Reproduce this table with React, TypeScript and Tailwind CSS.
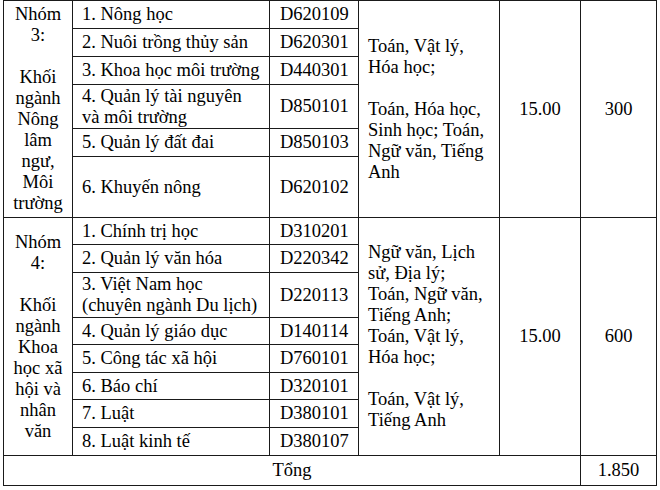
interface Row {
  name: React.ReactNode
  code: string
  h: string
}

const group3: Row[] = [
  { name: '1. Nông học', code: 'D620109', h: 'h-[28px]' },
  { name: '2. Nuôi trồng thủy sản', code: 'D620301', h: 'h-[28px]' },
  { name: '3. Khoa học môi trường', code: 'D440301', h: 'h-[28px]' },
  { name: <>4. Quản lý tài nguyên<br />và môi trường</>, code: 'D850101', h: 'h-[44px]' },
  { name: '5. Quản lý đất đai', code: 'D850103', h: 'h-[28px]' },
  { name: '6. Khuyến nông', code: 'D620102', h: 'h-[61px]' },
]

const group4: Row[] = [
  { name: '1. Chính trị học', code: 'D310201', h: 'h-[27px]' },
  { name: '2. Quản lý văn hóa', code: 'D220342', h: 'h-[28px]' },
  { name: <>3. Việt Nam học<br />(chuyên ngành Du lịch)</>, code: 'D220113', h: 'h-[45px]' },
  { name: '4. Quản lý giáo dục', code: 'D140114', h: 'h-[27px]' },
  { name: '5. Công tác xã hội', code: 'D760101', h: 'h-[28px]' },
  { name: '6. Báo chí', code: 'D320101', h: 'h-[27px]' },
  { name: '7. Luật', code: 'D380101', h: 'h-[28px]' },
  { name: '8. Luật kinh tế', code: 'D380107', h: 'h-[28px]' },
]

const cell = 'border border-[#1a1a1a] p-0 align-middle'

function Group({
  rows,
  label,
  subjects,
  score,
  quota,
}: {
  rows: Row[]
  label: React.ReactNode
  subjects: React.ReactNode
  score: string
  quota: string
}) {
  return (
    <>
      {rows.map((r, i) => (
        <tr key={r.code} className={r.h}>
          {i === 0 && (
            <td rowSpan={rows.length} className={`${cell} text-center`}>
              {label}
            </td>
          )}
          <td className={`${cell} pl-[9px] whitespace-nowrap`}>{r.name}</td>
          <td className={`${cell} pl-[10px]`}>{r.code}</td>
          {i === 0 && (
            <>
              <td rowSpan={rows.length} className={`${cell} pl-[9px] whitespace-nowrap`}>
                {subjects}
              </td>
              <td rowSpan={rows.length} className={`${cell} text-center`}>
                {score}
              </td>
              <td rowSpan={rows.length} className={`${cell} text-center`}>
                {quota}
              </td>
            </>
          )}
        </tr>
      ))}
    </>
  )
}

export default function App() {
  return (
    <div className="w-[660px] h-[490px] bg-white overflow-hidden">
      <table className="ml-[3px] w-[653px] table-fixed border-collapse text-[18.5px] leading-[21px] text-black font-['Liberation_Serif','Times_New_Roman',serif]">
        <colgroup>
          <col className="w-[69px]" />
          <col className="w-[197px]" />
          <col className="w-[89px]" />
          <col className="w-[141px]" />
          <col className="w-[81px]" />
          <col className="w-[76px]" />
        </colgroup>
        <tbody>
          <Group
            rows={group3}
            label={<>Nhóm<br />3:<br /><br />Khối<br />ngành<br />Nông<br />lâm<br />ngư,<br />Môi<br />trường</>}
            subjects={<>Toán, Vật lý,<br />Hóa học;<br /><br />Toán, Hóa học,<br />Sinh học; Toán,<br />Ngữ văn, Tiếng<br />Anh</>}
            score="15.00"
            quota="300"
          />
          <Group
            rows={group4}
            label={<>Nhóm<br />4:<br /><br />Khối<br />ngành<br />Khoa<br />học xã<br />hội và<br />nhân<br />văn</>}
            subjects={<>Ngữ văn, Lịch<br />sử, Địa lý;<br />Toán, Ngữ văn,<br />Tiếng Anh;<br />Toán, Vật lý,<br />Hóa học;<br /><br />Toán, Vật lý,<br />Tiếng Anh</>}
            score="15.00"
            quota="600"
          />
          <tr className="h-[30px]">
            <td colSpan={5} className={`${cell} text-center`}>Tổng</td>
            <td className={`${cell} text-center`}>1.850</td>
          </tr>
        </tbody>
      </table>
    </div>
  )
}
